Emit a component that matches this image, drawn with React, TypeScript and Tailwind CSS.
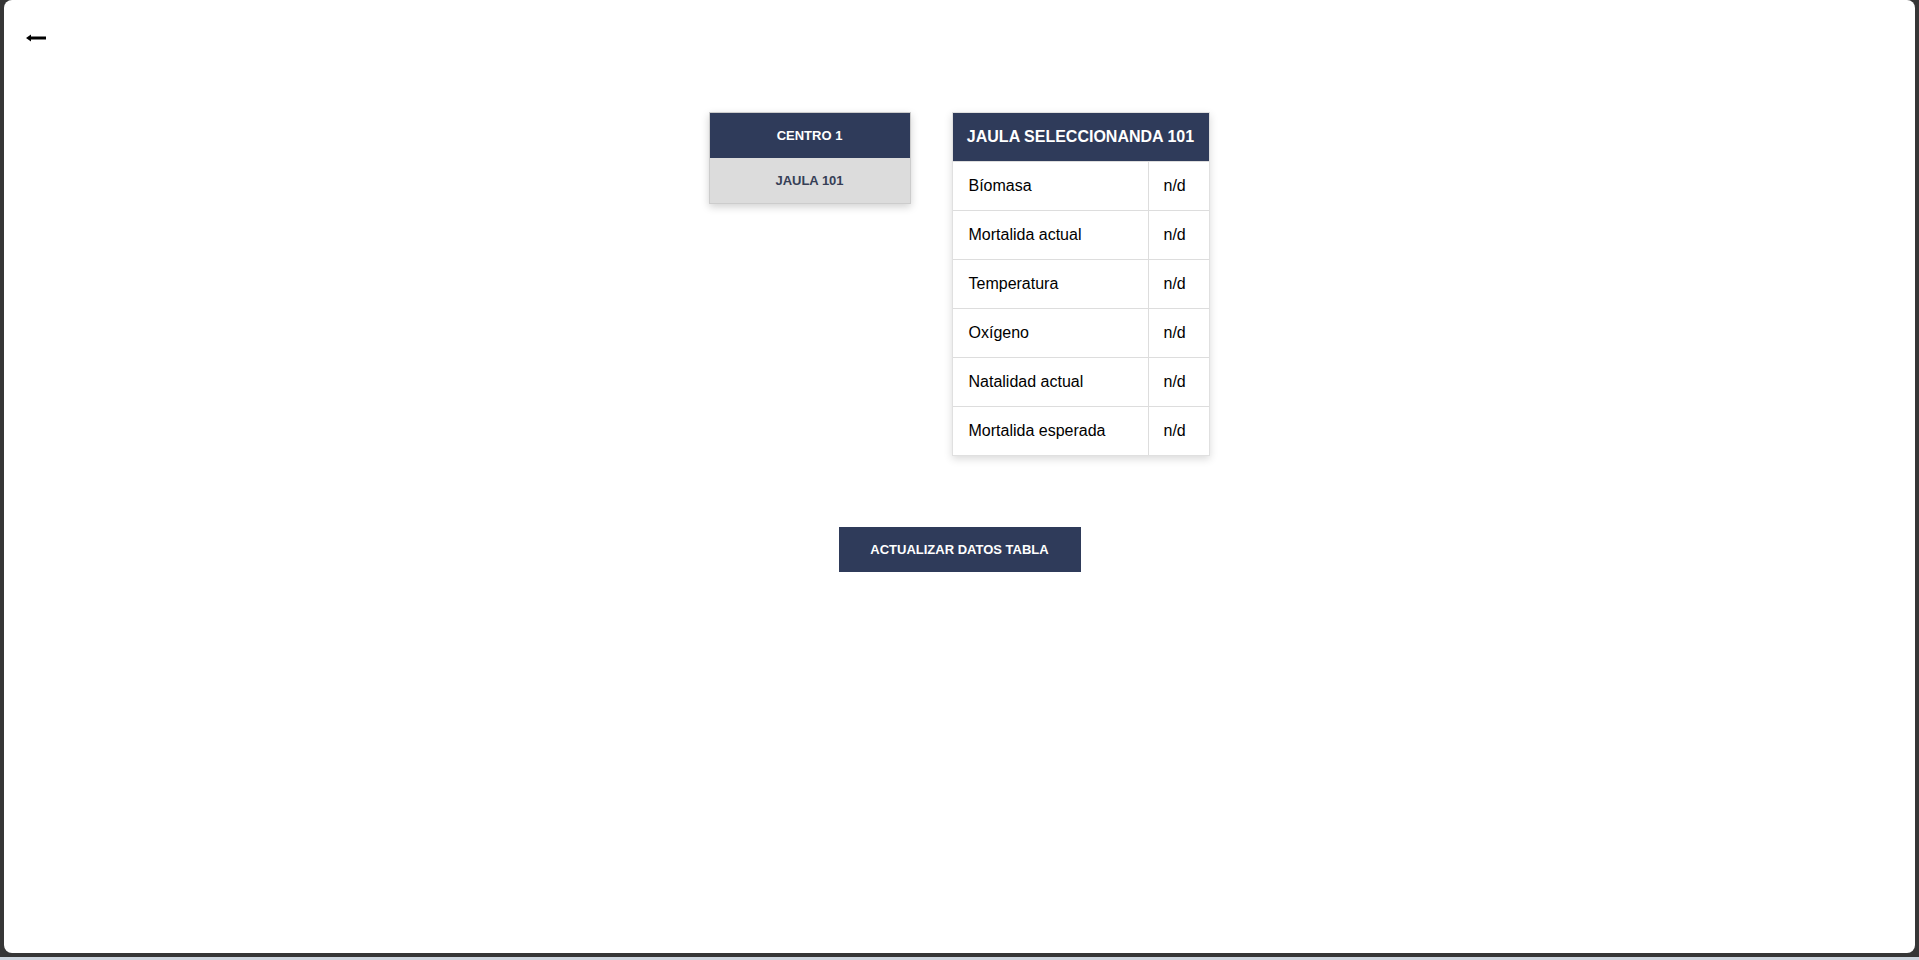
const ROWS = [
  "Bíomasa",
  "Mortalida actual",
  "Temperatura",
  "Oxígeno",
  "Natalidad actual",
  "Mortalida esperada",
];

function BackArrow() {
  return (
    <svg width="20" height="8" viewBox="0 0 20 8" className="block">
      <path d="M0 4 L5 0.5 L5 2.5 L20 2.5 L20 5.5 L5 5.5 L5 7.5 Z" fill="#000" />
    </svg>
  );
}

export default function App() {
  return (
    <div
      className="h-screen w-full flex flex-col bg-[#363636]"
      style={{ fontFamily: '"Liberation Sans", Arial, sans-serif' }}
    >
      <div className="flex-1 flex px-1 pb-1 min-h-0">
        <div className="flex-1 bg-white rounded-lg flex flex-col">
          <div className="pt-[34px] pl-[22px]">
            <button className="block cursor-pointer" aria-label="Volver">
              <BackArrow />
            </button>
          </div>

          <div className="mt-[70px] flex justify-center items-start gap-[41px] pr-[1px]">
            {/* menu */}
            <div className="w-[202px] border border-[#cccccc] shadow-[0_3px_8px_rgba(0,0,0,0.18)]">
              <div className="h-[45px] bg-[#2f3b5a] flex items-center justify-center text-white text-[13px] font-bold">
                CENTRO 1
              </div>
              <div className="h-[45px] bg-[#dcdcdc] flex items-center justify-center text-[#363f56] text-[13px] font-bold">
                JAULA 101
              </div>
            </div>

            {/* table */}
            <div className="w-[258px] border border-[#e0e0e0] shadow-[0_3px_8px_rgba(0,0,0,0.15)]">
              <div className="h-[48px] bg-[#2f3b5a] flex items-center justify-center text-white text-base font-bold">
                JAULA SELECCIONANDA 101
              </div>
              {ROWS.map((label) => (
                <div key={label} className="grid grid-cols-[195px_1fr] h-[49px] border-t border-[#dddddd] text-base text-black">
                  <div className="flex items-center pl-4">{label}</div>
                  <div className="flex items-center pl-[15px] border-l border-[#dddddd]">n/d</div>
                </div>
              ))}
            </div>
          </div>

          <div className="mt-[71px] flex justify-center">
            <button className="w-[242px] h-[45px] bg-[#2f3b5a] text-white text-[13px] font-bold">
              ACTUALIZAR DATOS TABLA
            </button>
          </div>
        </div>
      </div>
      <div className="h-[3px] bg-[#cdd5de]" />
    </div>
  );
}
